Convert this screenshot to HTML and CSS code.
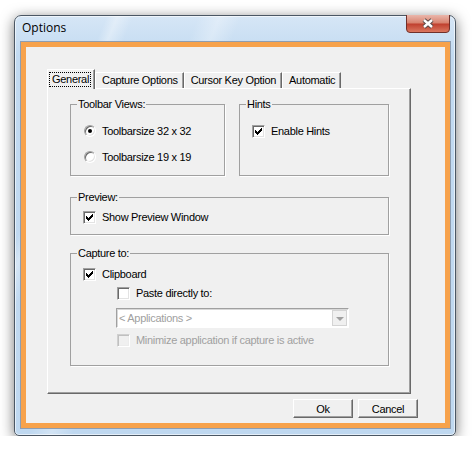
FILE: index.html
```html
<!DOCTYPE html>
<html lang="en">
<head>
  <meta charset="UTF-8" />
  <title>Options</title>
  <link rel="stylesheet" href="styles.css">
</head>
<body>
  <div class="window">
    <div class="titlebar">
      <span class="title">Options</span>
      <button class="close-btn" aria-label="Close">
        <svg width="44" height="18" viewBox="0 0 44 18">
          <defs>
            <linearGradient id="closeGrad" x1="0" y1="0" x2="0" y2="1">
              <stop offset="0" stop-color="#eab6ab"/>
              <stop offset="0.45" stop-color="#d8836f"/>
              <stop offset="0.52" stop-color="#c0412f"/>
              <stop offset="1" stop-color="#dc7a62"/>
            </linearGradient>
          </defs>
          <path d="M0.5 0 V14 Q0.5 17.5 4 17.5 H40 Q43.5 17.5 43.5 14 V0" fill="url(#closeGrad)" stroke="#70302a"/>
          <path d="M18 5 L26 12 M26 5 L18 12" stroke="#5a4a48" stroke-width="4.4"/>
          <path d="M18 5 L26 12 M26 5 L18 12" stroke="#ffffff" stroke-width="2.4"/>
        </svg>
      </button>
    </div>

    <div class="client">
      <div class="content">
        <div class="tabs">
          <div class="tab active"><span class="focus">General</span></div>
          <div class="tab">Capture Options</div>
          <div class="tab">Cursor Key Option</div>
          <div class="tab">Automatic</div>
        </div>

        <div class="tab-panel">
          <div class="group-row">
            <div class="group group-toolbar">
              <span class="group-title">Toolbar Views:</span>
              <label class="option">
                <span class="radio checked"></span>Toolbarsize 32 x 32
              </label>
              <label class="option">
                <span class="radio"></span>Toolbarsize 19 x 19
              </label>
            </div>

            <div class="group group-hints">
              <span class="group-title">Hints</span>
              <label class="option">
                <span class="checkbox checked"></span>Enable Hints
              </label>
            </div>
          </div>

          <div class="group group-preview">
            <span class="group-title">Preview:</span>
            <label class="option">
              <span class="checkbox checked"></span>Show Preview Window
            </label>
          </div>

          <div class="group group-capture">
            <span class="group-title">Capture to:</span>
            <label class="option">
              <span class="checkbox checked"></span>Clipboard
            </label>
            <label class="option sub">
              <span class="checkbox"></span>Paste directly to:
            </label>
            <div class="combo">
              <span class="combo-text">&lt; Applications &gt;</span>
              <span class="combo-arrow"></span>
            </div>
            <label class="option sub disabled">
              <span class="checkbox"></span>Minimize application if capture is active
            </label>
          </div>
        </div>

        <div class="buttons">
          <button class="btn">Ok</button>
          <button class="btn">Cancel</button>
        </div>
      </div>
    </div>
  </div>
</body>
</html>
```

FILE: styles.css
```css
body {
  margin: 0;
  background: #ffffff;
  font-family: 'Liberation Sans', Arial, sans-serif;
  font-size: 11px;
  letter-spacing: -0.3px;
  color: #000;
}

/* Window frame */
.window {
  margin: 15px 0 0 14px;
  width: 442px;
  height: 421px;
  box-sizing: border-box;
  padding: 0 5px 7px 6px;
  border: 1px solid #4b5764;
  border-radius: 7px 7px 5px 5px;
  background:
    linear-gradient(112deg, transparent 0, transparent 85px, rgba(255,255,255,0.35) 95px, transparent 110px, transparent 170px, rgba(255,255,255,0.3) 190px, transparent 210px),
    linear-gradient(to bottom, #d6e6f6 0, #c2daf1 40px, #bfd8f0 100%);
  box-shadow: 0 3px 14px rgba(0, 0, 0, 0.55), inset 0 0 0 1px rgba(255, 255, 255, 0.6);
}

.titlebar {
  display: flex;
  justify-content: space-between;
  height: 26px;
}

.title {
  font-family: 'Open Sans', 'Noto Sans', sans-serif;
  font-size: 12px;
  letter-spacing: 0;
  line-height: 16px;
  padding: 4px 0 0 1px;
  color: #000;
}

.close-btn {
  border: none;
  background: none;
  padding: 0;
  margin: -1px 0 0 0;
  width: 44px;
  height: 18px;
  display: block;
}

.close-btn svg {
  display: block;
}

/* Orange client border */
.client {
  border: 5px solid #f7a24b;
  outline: 1px solid #8e9db0;
  background: #f0f0f0;
  height: 386px;
  box-sizing: border-box;
}

.content {
  padding: 22px 0 0 21px;
}

/* Tabs */
.tabs {
  display: flex;
  align-items: flex-end;
  height: 19px;
  position: relative;
  z-index: 1;
}

.tab {
  box-sizing: border-box;
  height: 16px;
  line-height: 14px;
  padding: 0 5px 0 6px;
  border-top: 1px solid #fff;
  border-left: 1px solid #fff;
  border-right: 1px solid #696969;
  box-shadow: inset -1px 0 0 #a0a0a0;
  background: #f0f0f0;
  white-space: nowrap;
}

.tab.active {
  height: 20px;
  margin-bottom: -1px;
  padding: 2px 3px 0 1px;
  line-height: 13px;
}

.focus {
  display: inline-block;
  border: 1px dotted #000;
  padding: 0 1px 0 2px;
}

.tab-panel {
  width: 364px;
  height: 306px;
  box-sizing: border-box;
  border-top: 1px solid #fff;
  border-left: 1px solid #fff;
  border-right: 1px solid #696969;
  border-bottom: 1px solid #696969;
  box-shadow: inset -1px -1px 0 #a0a0a0;
  padding: 15px 0 0 22px;
}

/* Group boxes */
.group-row {
  display: flex;
  gap: 14px;
}

.group {
  position: relative;
  box-sizing: border-box;
  border: 1px solid #a0a0a0;
  box-shadow: 1px 1px 0 #fff;
  display: flex;
  flex-direction: column;
  align-items: flex-start;
}

.group-title {
  position: absolute;
  top: -7px;
  left: 6px;
  padding: 0 1px;
  line-height: 13px;
  background: #f0f0f0;
}

.group-toolbar {
  width: 155px;
  height: 72px;
  padding: 18px 0 0 13px;
  gap: 10px;
}

.group-hints {
  width: 150px;
  height: 72px;
  padding: 18px 0 0 12px;
}

.group-preview {
  width: 319px;
  height: 38px;
  margin-top: 21px;
  padding: 11px 0 0 12px;
}

.group-capture {
  width: 319px;
  height: 113px;
  margin-top: 18px;
  padding: 12px 0 0 12px;
}

.option {
  display: flex;
  align-items: center;
  gap: 6px;
  height: 16px;
  white-space: nowrap;
}

.option.sub {
  margin-left: 34px;
  margin-top: 3px;
}

.option.disabled {
  color: #a0a0a0;
  margin-top: 4px;
}

/* Radio */
.radio {
  width: 12px;
  height: 12px;
  box-sizing: border-box;
  border-radius: 50%;
  border: 1px solid;
  border-color: #a0a0a0 #fff #fff #a0a0a0;
  box-shadow: inset 1px 1px 0 #696969, inset -1px -1px 0 #e3e3e3;
  background: #fff;
  position: relative;
}

.radio.checked::after {
  content: "";
  position: absolute;
  left: 3px;
  top: 3px;
  width: 4px;
  height: 4px;
  border-radius: 50%;
  background: #000;
}

/* Checkbox */
.checkbox {
  width: 13px;
  height: 13px;
  box-sizing: border-box;
  border: 1px solid;
  border-color: #a0a0a0 #fff #fff #a0a0a0;
  box-shadow: inset 1px 1px 0 #696969, inset -1px -1px 0 #e3e3e3;
  background: #fff;
  position: relative;
}

.checkbox.checked::after {
  content: "";
  position: absolute;
  left: 2px;
  top: 2px;
  width: 7px;
  height: 7px;
  background:
    linear-gradient(#000, #000) 0 2px / 1px 3px no-repeat,
    linear-gradient(#000, #000) 1px 3px / 1px 3px no-repeat,
    linear-gradient(#000, #000) 2px 4px / 1px 3px no-repeat,
    linear-gradient(#000, #000) 3px 3px / 1px 3px no-repeat,
    linear-gradient(#000, #000) 4px 2px / 1px 3px no-repeat,
    linear-gradient(#000, #000) 5px 1px / 1px 3px no-repeat,
    linear-gradient(#000, #000) 6px 0 / 1px 3px no-repeat;
}

.option.disabled .checkbox {
  background: #f0f0f0;
  border-color: #d0d0d0 #fff #fff #d0d0d0;
  box-shadow: inset 1px 1px 0 #c0c0c0, inset -1px -1px 0 #ececec;
}

/* Combo box */
.combo {
  margin: 7px 0 0 33px;
  width: 233px;
  height: 20px;
  box-sizing: border-box;
  border: 1px solid;
  border-color: #a0a0a0 #fff #fff #a0a0a0;
  box-shadow: inset 1px 1px 0 #d8d8d8;
  background: #fff;
  display: flex;
  align-items: center;
  justify-content: space-between;
  padding: 0 1px 0 2px;
}

.combo-text {
  color: #a0a0a0;
}

.combo-arrow {
  width: 15px;
  height: 16px;
  box-sizing: border-box;
  border: 1px solid #d4d4d4;
  background: #f0f0f0;
  position: relative;
}

.combo-arrow::after {
  content: "";
  position: absolute;
  left: 3px;
  top: 6px;
  border-left: 4px solid transparent;
  border-right: 4px solid transparent;
  border-top: 4px solid #a0a0a0;
}

/* Buttons */
.buttons {
  display: flex;
  justify-content: flex-end;
  gap: 5px;
  margin-top: 5px;
  padding-right: 27px;
}

.btn {
  width: 60px;
  height: 19px;
  box-sizing: border-box;
  padding: 0;
  font-family: 'Liberation Sans', Arial, sans-serif;
  font-size: 11px;
  letter-spacing: -0.3px;
  color: #000;
  background: #f0f0f0;
  border: 1px solid;
  border-color: #fff #696969 #696969 #fff;
  box-shadow: inset -1px -1px 0 #a0a0a0;
}
```
